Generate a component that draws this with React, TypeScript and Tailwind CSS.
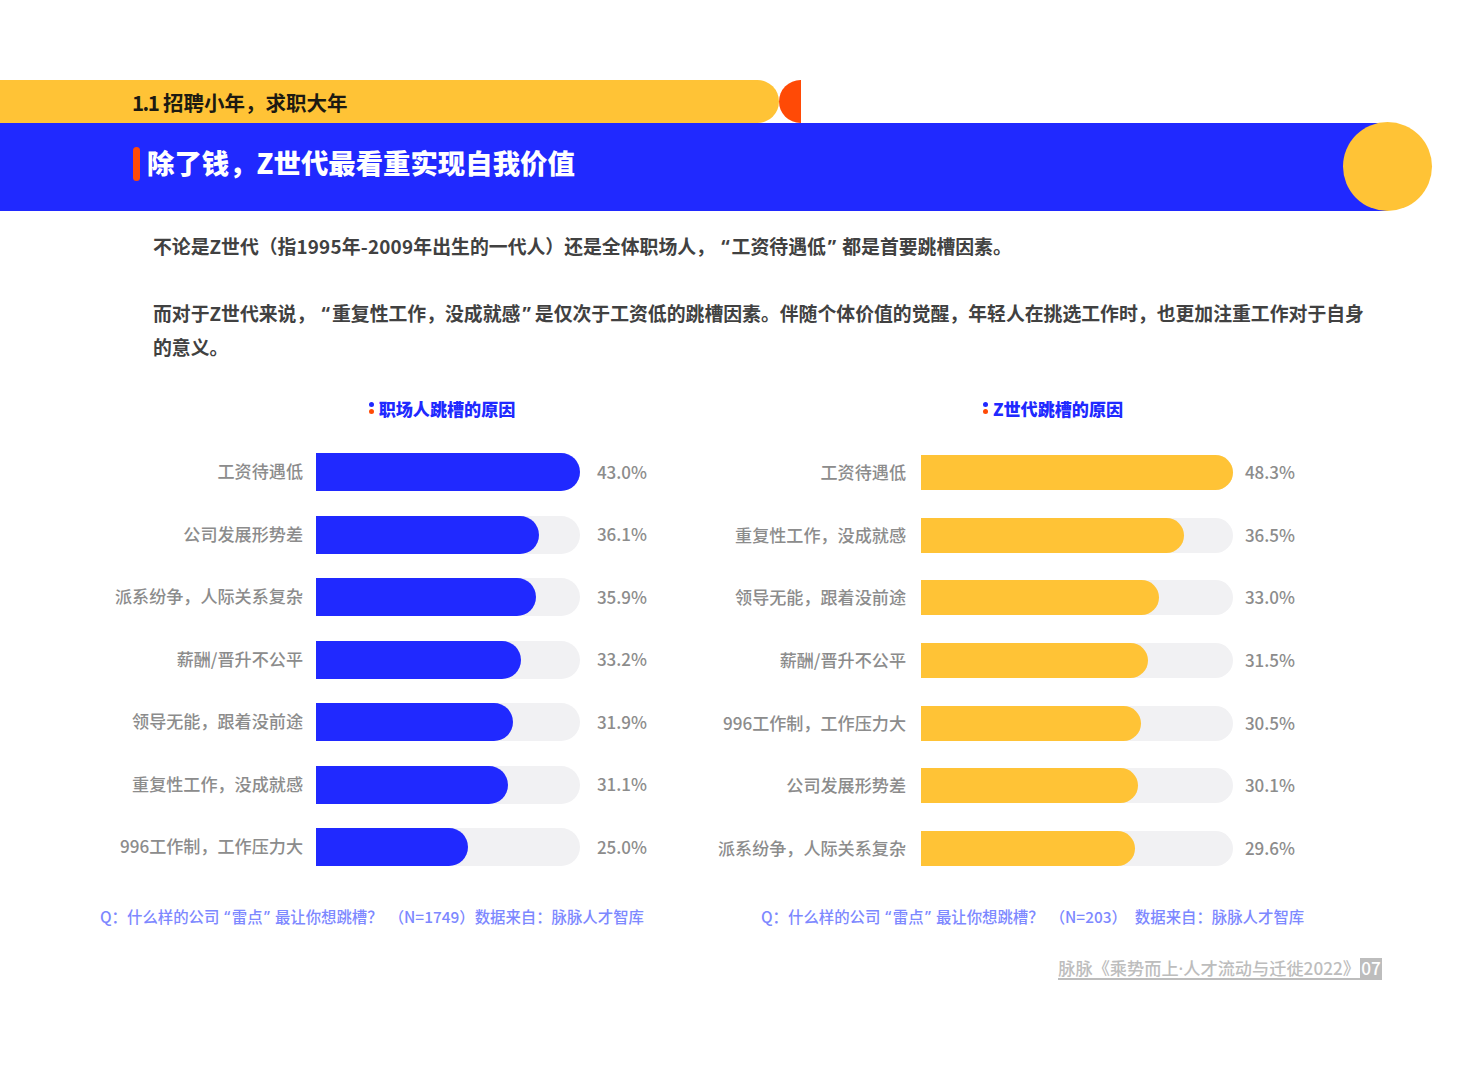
const FONT = "font-['Noto_Sans_CJK_SC','Noto_Sans',sans-serif]";
const QUOTE = "font-['Noto_Sans',sans-serif] leading-[0]";

const LEFT_ROWS = [
  { label: "工资待遇低", value: 43.0, width: 264 },
  { label: "公司发展形势差", value: 36.1, width: 223 },
  { label: "派系纷争，人际关系复杂", value: 35.9, width: 220 },
  { label: "薪酬/晋升不公平", value: 33.2, width: 205 },
  { label: "领导无能，跟着没前途", value: 31.9, width: 197 },
  { label: "重复性工作，没成就感", value: 31.1, width: 192 },
  { label: "996工作制，工作压力大", value: 25.0, width: 152 },
];

const RIGHT_ROWS = [
  { label: "工资待遇低", value: 48.3, width: 312 },
  { label: "重复性工作，没成就感", value: 36.5, width: 263 },
  { label: "领导无能，跟着没前途", value: 33.0, width: 238 },
  { label: "薪酬/晋升不公平", value: 31.5, width: 227 },
  { label: "996工作制，工作压力大", value: 30.5, width: 220 },
  { label: "公司发展形势差", value: 30.1, width: 217 },
  { label: "派系纷争，人际关系复杂", value: 29.6, width: 214 },
];

function ChartTitle({ children }: { children: string }) {
  return (
    <div className="flex items-center justify-center gap-[5px] h-[24px]">
      <span className="flex flex-col gap-[2px] mt-[2px]">
        <span className="w-[5px] h-[5px] rounded-full bg-[#2029ff]" />
        <span className="w-[5px] h-[5px] rounded-full bg-[#ff4a06]" />
      </span>
      <span className="text-[17.1px] font-black text-[#2029ff] leading-none mt-[4px]">{children}</span>
    </div>
  );
}

function Footnote({ n }: { n: number }) {
  return (
    <>
      Q：什么样的公司 <span className={`${QUOTE} mx-[1.5px]`}>“</span>雷点<span className={`${QUOTE} mx-[1.5px]`}>”</span> 最让你想跳槽？
      <span className="ml-[6px]">（N={n}）</span>
    </>
  );
}

export default function App() {
  return (
    <div className={`${FONT} w-[1465px] h-[1079px] bg-white overflow-hidden pt-[80px]`}>
      <div className="flex h-[43px]">
        <div className="w-[779px] h-full bg-[#ffc336] rounded-r-[22px] pl-[132px] pt-[2px] flex items-center">
          <span className="text-[20.5px] font-bold text-[#1c1a12] leading-none">
            <span className="tracking-[-1.5px]">1.1</span> 招聘小年，求职大年
          </span>
        </div>
        <div className="w-[22px] h-full bg-[#ff4a06] rounded-l-[22px]" />
      </div>

      <div className="relative h-[88px] w-[1388px] bg-[#2029ff] pl-[133px] pt-[24px]">
        <div className="flex items-center gap-[7px] h-[34px]">
          <span className="w-[7px] h-[34px] rounded-full bg-[#ff4a06]" />
          <span className="text-[27.4px] font-black text-white leading-none mt-[-2px]">除了钱，Z世代最看重实现自我价值</span>
        </div>
        <div className="absolute left-[1343px] top-[-1px] w-[89px] h-[89px] rounded-full bg-[#ffc336]" />
      </div>

      <div className="pl-[153px] pr-[90px] pt-[18px] text-[18.85px] font-bold text-[#414141] leading-[34px]">
        <p>
          不论是Z世代（指<span className="tracking-[0.2px]">1995年-2009年</span>出生的一代人）还是全体职场人， <span className={`${QUOTE} mx-[2px]`}>“</span>工资待遇低<span className={`${QUOTE} ml-[2px] mr-[6px]`}>”</span>都是首要跳槽因素。
        </p>
        <p className="mt-[33px]">
          而对于Z世代来说， <span className={`${QUOTE} mx-[2px]`}>“</span>重复性工作，没成就感<span className={`${QUOTE} ml-[2px] mr-[4px]`}>”</span>是仅次于工资低的跳槽因素。伴随个体价值的觉醒，年轻人在挑选工作时，也更加注重工作对于自身
          <br />
          的意义。
        </p>
      </div>

      <div className="flex mt-[31px]">
        <div className="w-[716px] shrink-0">
          <div className="pl-[168px]">
            <ChartTitle>职场人跳槽的原因</ChartTitle>
          </div>
          <div className="flex flex-col gap-[24.5px] mt-[34px]">
            {LEFT_ROWS.map((row) => (
              <div key={row.label} className="flex items-center h-[38px]">
                <span className="w-[303px] pb-[2px] text-right text-[17.1px] font-medium text-[#8c8c8c] leading-none">{row.label}</span>
                <div className="ml-[13px] w-[264px] h-full bg-[#f1f1f3] rounded-r-[19px]">
                  <div className="h-full bg-[#2029ff] rounded-r-[19px]" style={{ width: row.width }} />
                </div>
                <span className="w-[67px] pb-[2px] text-right text-[17px] font-medium text-[#8c8c8c] leading-none">{row.value.toFixed(1)}%</span>
              </div>
            ))}
          </div>
        </div>

        <div className="flex-1">
          <div className="w-[674px]">
            <ChartTitle>Z世代跳槽的原因</ChartTitle>
          </div>
          <div className="flex flex-col gap-[27.67px] mt-[36px]">
            {RIGHT_ROWS.map((row) => (
              <div key={row.label} className="flex items-center h-[35px]">
                <span className="w-[190px] pb-[2px] whitespace-nowrap flex justify-end text-[17.1px] font-medium text-[#8c8c8c] leading-none">{row.label}</span>
                <div className="ml-[15px] w-[312px] h-full bg-[#f1f1f3] rounded-r-[18px]">
                  <div className="h-full bg-[#ffc336] rounded-r-[18px]" style={{ width: row.width }} />
                </div>
                <span className="w-[62px] pb-[2px] text-right text-[17px] font-medium text-[#8c8c8c] leading-none">{row.value.toFixed(1)}%</span>
              </div>
            ))}
          </div>
        </div>
      </div>

      <div className="flex mt-[38px] text-[15.4px] font-medium text-[#7d88ff] leading-[24px]">
        <p className="pl-[100px] w-[761px] whitespace-nowrap">
          <Footnote n={1749} />
          数据来自：脉脉人才智库
        </p>
        <p className="whitespace-nowrap">
          <Footnote n={203} />
          <span className="ml-[8px]">数据来自：脉脉人才智库</span>
        </p>
      </div>

      <div className="flex justify-end pr-[83px] mt-[30px]">
        <div className="flex items-center h-[22px] border-b-2 border-[#bdbdbd] text-[17.2px] font-medium text-[#bdbdbd] leading-none">
          <span>
            脉脉《乘势而上<span className={QUOTE}>·</span>人才流动与迁徙2022》
          </span>
          <span className="w-[22px] h-[20px] bg-[#bdbdbd] text-white flex items-center justify-center">07</span>
        </div>
      </div>
    </div>
  );
}
